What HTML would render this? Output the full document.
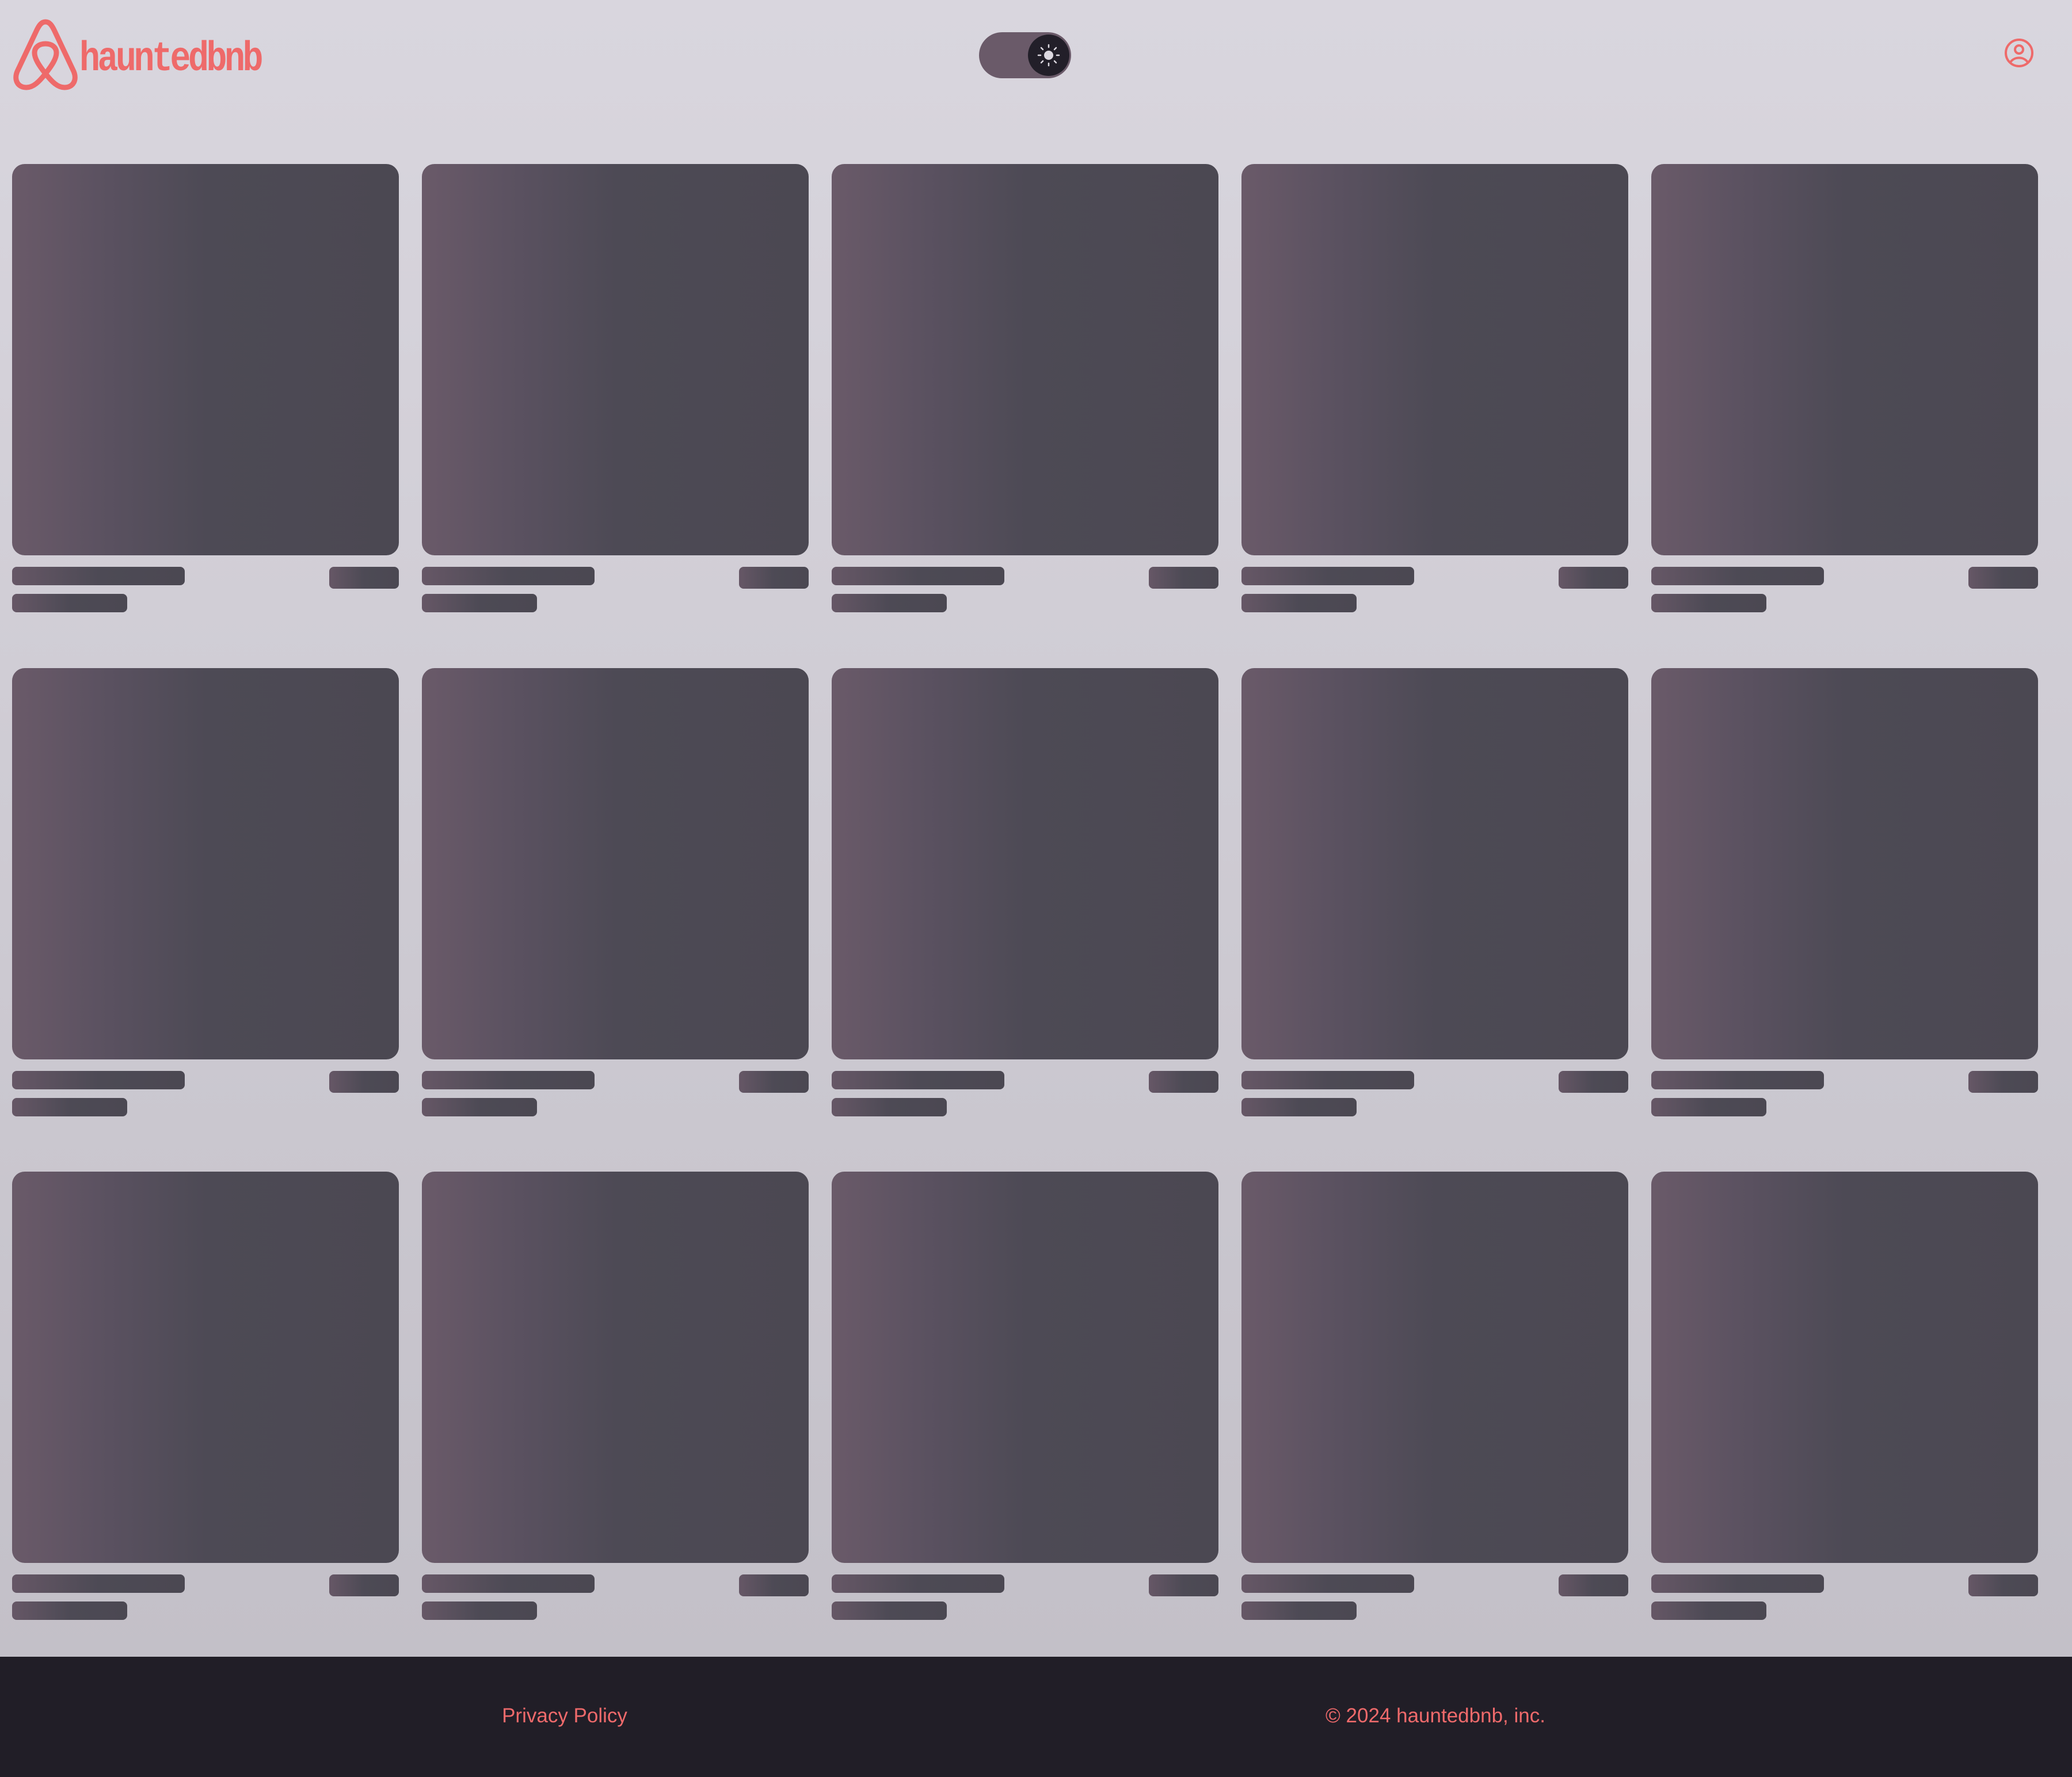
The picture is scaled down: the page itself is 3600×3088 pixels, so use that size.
<!DOCTYPE html>
<html><head><meta charset="utf-8"><style>
*{margin:0;padding:0;box-sizing:border-box}
html,body{width:3600px;height:3088px;overflow:hidden}
body{background:linear-gradient(#d9d6de,#c3c0c8 2879px);position:relative;font-family:"Liberation Sans",sans-serif}
.c{position:absolute;width:672px}
.img{height:680px;border-radius:22px;background:linear-gradient(90deg,#6a5a69 0%,#5a5160 25%,#4d4a55 50%,#4b4852 100%)}
.b{position:absolute;border-radius:8px;background:linear-gradient(90deg,#665766,#4d4a55 50%,#4b4852)}
.t{left:0;top:700px;width:300px;height:32px}
.p{right:0;top:700px;width:121px;height:38px}
.s{left:0;top:747px;width:200px;height:32px}
footer{position:absolute;left:0;top:2879px;width:3600px;height:209px;background:#211e27;color:#ef6a6b;font-size:35px}
footer span{position:absolute;top:83px;transform:translateX(-50%);white-space:nowrap}
</style></head><body>
<svg style="position:absolute;left:20px;top:32px" width="118" height="128" viewBox="0 0 118 128">
<path d="M59 6 C52 6 48 12 44 20 L10 92 C4 106 10 120 26 120 C38 120 48 110 59 96 C70 110 80 120 92 120 C108 120 114 106 108 92 L74 20 C70 12 66 6 59 6 Z M59 96 C48 82 40 70 40 60 C40 50 48 44 59 44 C70 44 78 50 78 60 C78 70 70 82 59 96 Z" fill="none" stroke="#ee6a6a" stroke-width="9" stroke-linejoin="round"/>
</svg>
<div style="position:absolute;left:138px;top:56px;font-family:'Liberation Mono',monospace;font-weight:bold;font-size:60px;color:#ee6a6a;letter-spacing:-4.5px;line-height:80px;transform:scaleY(1.2);transform-origin:left top">hauntedbnb</div>
<div style="position:absolute;left:1701px;top:56px;width:160px;height:80px;border-radius:40px;background:#6a5a69"></div>
<div style="position:absolute;left:1786px;top:60px;width:72px;height:72px;border-radius:50%;background:#221f29"></div>
<svg style="position:absolute;left:1802px;top:76px" width="40" height="40" viewBox="0 0 40 40"><circle cx="20" cy="20" r="8" fill="#dcd8e0"/><g stroke="#dcd8e0" stroke-width="2.5" stroke-linecap="round"><path d="M20 2v4M20 34v4M2 20h4M34 20h4M7 7l3 3M30 30l3 3M33 7l-3 3M10 30l-3 3"/></g></svg>
<svg style="position:absolute;left:3482px;top:66px" width="52" height="52" viewBox="0 0 52 52" fill="none" stroke="#ee6a6a" stroke-width="4"><circle cx="26" cy="26" r="23"/><circle cx="26" cy="20" r="7"/><path d="M11 42 C18 32 34 32 41 42"/></svg>
<div class="c" style="left:21px;top:285px"><div class="img"></div><div class="b t"></div><div class="b p"></div><div class="b s"></div></div>
<div class="c" style="left:733px;top:285px"><div class="img"></div><div class="b t"></div><div class="b p"></div><div class="b s"></div></div>
<div class="c" style="left:1445px;top:285px"><div class="img"></div><div class="b t"></div><div class="b p"></div><div class="b s"></div></div>
<div class="c" style="left:2157px;top:285px"><div class="img"></div><div class="b t"></div><div class="b p"></div><div class="b s"></div></div>
<div class="c" style="left:2869px;top:285px"><div class="img"></div><div class="b t"></div><div class="b p"></div><div class="b s"></div></div>
<div class="c" style="left:21px;top:1161px"><div class="img"></div><div class="b t"></div><div class="b p"></div><div class="b s"></div></div>
<div class="c" style="left:733px;top:1161px"><div class="img"></div><div class="b t"></div><div class="b p"></div><div class="b s"></div></div>
<div class="c" style="left:1445px;top:1161px"><div class="img"></div><div class="b t"></div><div class="b p"></div><div class="b s"></div></div>
<div class="c" style="left:2157px;top:1161px"><div class="img"></div><div class="b t"></div><div class="b p"></div><div class="b s"></div></div>
<div class="c" style="left:2869px;top:1161px"><div class="img"></div><div class="b t"></div><div class="b p"></div><div class="b s"></div></div>
<div class="c" style="left:21px;top:2036px"><div class="img"></div><div class="b t"></div><div class="b p"></div><div class="b s"></div></div>
<div class="c" style="left:733px;top:2036px"><div class="img"></div><div class="b t"></div><div class="b p"></div><div class="b s"></div></div>
<div class="c" style="left:1445px;top:2036px"><div class="img"></div><div class="b t"></div><div class="b p"></div><div class="b s"></div></div>
<div class="c" style="left:2157px;top:2036px"><div class="img"></div><div class="b t"></div><div class="b p"></div><div class="b s"></div></div>
<div class="c" style="left:2869px;top:2036px"><div class="img"></div><div class="b t"></div><div class="b p"></div><div class="b s"></div></div>
<footer><span style="left:981px">Privacy Policy</span><span style="left:2494px">© 2024 hauntedbnb, inc.</span></footer>
</body></html>
